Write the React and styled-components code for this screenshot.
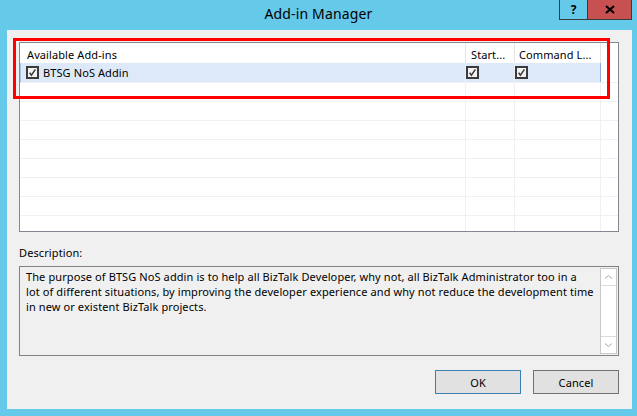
import React from 'react';
import styled, { createGlobalStyle } from 'styled-components';

const UI_FONT = `'Noto Sans', 'Liberation Sans', sans-serif`;

const GlobalStyle = createGlobalStyle`
  html, body {
    margin: 0;
    padding: 0;
    background: #65c9ea;
  }
  body {
    font-family: ${UI_FONT};
    font-size: 11px;
    letter-spacing: 0.1px;
    color: #000;
  }
`;

const Frame = styled.div`
  width: 637px;
  height: 416px;
  background: #65c9ea;
  display: flex;
  flex-direction: column;
`;

const TitleBar = styled.div`
  height: 30px;
  display: grid;
  grid-template-columns: 1fr auto 1fr;
  align-items: start;
`;

const Title = styled.div`
  grid-column: 2;
  font-size: 14px;
  letter-spacing: 0.15px;
  line-height: 28px;
  color: #000;
`;

const Controls = styled.div`
  grid-column: 3;
  justify-self: end;
  display: flex;
  margin-right: 5px;
`;

const CaptionButton = styled.div`
  box-sizing: border-box;
  height: 20px;
  width: ${(p) => p.$width}px;
  background: ${(p) => p.$bg};
  border: 1px solid #3a3a3a;
  border-top: none;
  border-left-width: ${(p) => (p.$joined ? 0 : 1)}px;
  display: flex;
  align-items: center;
  justify-content: center;
  font-weight: bold;
  font-size: 12px;
  letter-spacing: 0;
  line-height: 1;
`;

const Client = styled.div`
  flex: 1;
  margin: 0 5px 7px 7px;
  background: #f0f0f0;
  padding: 12px 13px 0 12px;
  position: relative;
  display: flex;
  flex-direction: column;
`;

const Annotation = styled.div`
  position: absolute;
  left: 6px;
  top: 8px;
  width: 597px;
  height: 61px;
  box-sizing: border-box;
  border: 3px solid #ff0000;
  pointer-events: none;
`;

const ListView = styled.div`
  box-sizing: border-box;
  width: 600px;
  height: 190px;
  border: 1px solid #828790;
  background: #fff;
  overflow: hidden;
`;

const HeaderRow = styled.div`
  display: flex;
  height: 20px;
`;

const HeaderCell = styled.div`
  box-sizing: border-box;
  width: ${(p) => p.$width}px;
  flex: ${(p) => (p.$width ? 'none' : 1)};
  border-right: ${(p) => (p.$width ? '1px solid #e5e5e5' : 'none')};
  padding: 4px 0 0 ${(p) => p.$pad}px;
  line-height: 15px;
  white-space: nowrap;
  overflow: hidden;
`;

const Row = styled.div`
  box-sizing: border-box;
  display: flex;
  height: ${(p) => (p.$first ? 20 : 19)}px;
  border-bottom: 1px solid #f0f0f0;
`;

const Selection = styled.div`
  display: flex;
  background: #dde9f9;
  box-shadow: inset 1px 0 0 #a9c4e6;
`;

const Cell = styled.div`
  box-sizing: border-box;
  width: ${(p) => p.$width}px;
  flex: ${(p) => (p.$width ? 'none' : 1)};
  border-right: ${(p) => (p.$width ? `1px solid ${p.$edge || '#f0f0f0'}` : 'none')};
  display: flex;
  align-items: center;
  gap: 4px;
  padding-left: ${(p) => p.$pad || 0}px;
  white-space: nowrap;
  line-height: 15px;
`;

const Label = styled.div`
  margin-top: 13px;
  line-height: 16px;
`;

const TextBox = styled.div`
  box-sizing: border-box;
  margin-top: 5px;
  height: 90px;
  border: 1px solid #828282;
  background: #f0f0f0;
  display: flex;
`;

const TextBody = styled.div`
  flex: 1;
  padding: 2px 0 0 6px;
  line-height: 15px;
  white-space: nowrap;
  overflow: hidden;
`;

const Scrollbar = styled.div`
  box-sizing: border-box;
  width: 17px;
  margin: 1px 1px 1px 0;
  border: 1px solid #c8c8c8;
  background: #fff;
  display: flex;
  flex-direction: column;
  justify-content: space-between;
`;

const ScrollArrow = styled.div`
  height: 16px;
  display: flex;
  align-items: center;
  justify-content: center;
  border-${(p) => (p.$down ? 'top' : 'bottom')}: 1px solid #dcdcdc;
`;

const ButtonRow = styled.div`
  margin-top: 14px;
  display: flex;
  justify-content: flex-end;
  gap: 12px;
`;

const Button = styled.div`
  box-sizing: border-box;
  width: 86px;
  height: 24px;
  background: #e1e1e1;
  border: 1px solid ${(p) => (p.$default ? '#3c7fb1' : '#707070')};
  display: flex;
  align-items: center;
  justify-content: center;
`;

const CheckBox = () => (
  <svg width="13" height="13" viewBox="0 0 13 13" style={{ flex: 'none' }}>
    <rect x="0" y="0" width="13" height="13" fill="#3a3a3a" />
    <rect x="2" y="2" width="9" height="9" fill="#f2f2f2" />
    <path d="M3.6 6.8 L5.4 9.2 L9.4 3.4" fill="none" stroke="#3a3a3a" strokeWidth="1.5" />
  </svg>
);

const Chevron = ({ down }) => (
  <svg width="9" height="6" viewBox="0 0 9 6">
    <path
      d={down ? 'M1 1.5 L4.5 4.5 L8 1.5' : 'M1 4.5 L4.5 1.5 L8 4.5'}
      fill="none"
      stroke="#a8a8a8"
      strokeWidth="1"
    />
  </svg>
);

const CloseGlyph = () => (
  <svg width="10" height="9" viewBox="0 0 10 9">
    <path d="M1 1 L9 8 M9 1 L1 8" stroke="#000" strokeWidth="2.2" />
  </svg>
);

const columns = [446, 49, 86];
const emptyRows = Array.from({ length: 8 });

const App = () => (
  <>
    <GlobalStyle />
    <Frame>
      <TitleBar>
        <Title>Add-in Manager</Title>
        <Controls>
          <CaptionButton $width={29} $bg="#65c9ea">?</CaptionButton>
          <CaptionButton $width={44} $bg="#c75050" $joined>
            <CloseGlyph />
          </CaptionButton>
        </Controls>
      </TitleBar>

      <Client>
        <ListView>
          <HeaderRow>
            <HeaderCell $width={columns[0]} $pad={7}>Available Add-ins</HeaderCell>
            <HeaderCell $width={columns[1]} $pad={5}>Start...</HeaderCell>
            <HeaderCell $width={columns[2]} $pad={4}>Command L...</HeaderCell>
            <HeaderCell />
          </HeaderRow>

          <Row $first>
            <Selection>
              <Cell $width={columns[0]} $pad={6}>
                <CheckBox />
                <span>BTSG NoS Addin</span>
              </Cell>
              <Cell $width={columns[1]}>
                <CheckBox />
              </Cell>
              <Cell $width={columns[2]} $edge="#8aaedb">
                <CheckBox />
              </Cell>
            </Selection>
            <Cell />
          </Row>

          {emptyRows.map((_, i) => (
            <Row key={i}>
              <Cell $width={columns[0]} />
              <Cell $width={columns[1]} />
              <Cell $width={columns[2]} />
              <Cell />
            </Row>
          ))}
        </ListView>

        <Label>Description:</Label>
        <TextBox>
          <TextBody>
            The purpose of BTSG NoS addin is to help all BizTalk Developer, why not, all BizTalk Administrator too in a
            <br />
            lot of different situations, by improving the developer experience and why not reduce the development time
            <br />
            in new or existent BizTalk projects.
          </TextBody>
          <Scrollbar>
            <ScrollArrow>
              <Chevron />
            </ScrollArrow>
            <ScrollArrow $down>
              <Chevron down />
            </ScrollArrow>
          </Scrollbar>
        </TextBox>

        <ButtonRow>
          <Button $default>OK</Button>
          <Button>Cancel</Button>
        </ButtonRow>

        <Annotation />
      </Client>
    </Frame>
  </>
);

export default App;
